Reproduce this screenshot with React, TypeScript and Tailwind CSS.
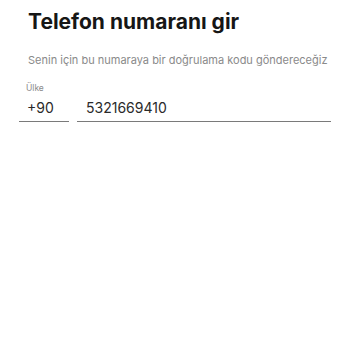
import React from 'react';

export default function App() {
  return (
    <div className="w-[350px] h-[350px] bg-white px-[19px] pt-[8px]" style={{ fontFamily: 'Inter, "Noto Sans", sans-serif' }}>
      <h1 className="pl-[9px] text-[21px] leading-[28px] font-bold text-[#161616]">
        Telefon numaranı gir
      </h1>
      <p className="pl-[9px] mt-[16px] text-[11px] leading-[16px] text-[#8a8a8a] whitespace-nowrap">
        Senin için bu numaraya bir doğrulama kodu göndereceğiz
      </p>
      <div className="mt-[15px] flex gap-[8px]">
        <div className="w-[50px] border-b border-[#7a7a7a]">
          <div className="pl-[7px] text-[8.5px] leading-[10px] text-[#8a8a8a]">Ülke</div>
          <div className="pl-[8px] mt-[5px] pb-[3px] text-[14px] leading-[20px] text-[#2a2a2a]">+90</div>
        </div>
        <div className="flex-1 border-b border-[#7a7a7a] flex items-end">
          <div className="pl-[9px] pb-[3px] text-[14px] leading-[20px] text-[#2a2a2a]">5321669410</div>
        </div>
      </div>
    </div>
  );
}
